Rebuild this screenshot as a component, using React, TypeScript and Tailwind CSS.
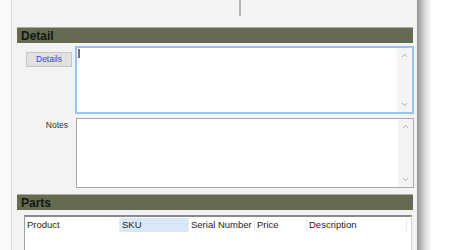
import { ChevronUp, ChevronDown } from 'lucide-react';

function ScrollBar() {
  return (
    <div className="w-[15px] flex flex-col justify-between items-center bg-[#f4f4f4] py-[3px]">
      <ChevronUp className="w-[9px] h-[9px] text-[#a8a8a8]" strokeWidth={2.5} />
      <ChevronDown className="w-[9px] h-[9px] text-[#a8a8a8]" strokeWidth={2.5} />
    </div>
  );
}

const columns = [
  { label: 'Product', w: 'w-[95px]', active: false },
  { label: 'SKU', w: 'w-[69px]', active: true },
  { label: 'Serial Number', w: 'w-[66px]', active: false },
  { label: 'Price', w: 'w-[52px]', active: false },
  { label: 'Description', w: 'w-[100px]', active: false },
];

export default function App() {
  return (
    <div
      className="w-[450px] h-[250px] flex bg-white overflow-hidden"
      style={{ fontFamily: '"Liberation Sans", Arial, sans-serif' }}
    >
      {/* desktop strip on the left */}
      <div className="w-[12px] shrink-0 bg-[#f9f9f9] border-r border-[#dedede]" />

      {/* form window */}
      <div className="w-[406px] shrink-0 bg-[#f3f3f3] border-r border-[#9a9a9a] flex flex-col">
        <div className="h-[27px] pl-[227px]">
          <div className="w-[2px] h-[16px] bg-[#b4b4ac]" />
        </div>

        {/* Detail section */}
        <div className="ml-[5px] w-[396px] h-[16px] bg-[#656b52] border-t border-[#a9ad9a] flex items-center pl-[4px]">
          <span className="text-[12px] font-bold text-[#151515] leading-none">Detail</span>
        </div>

        <div className="flex mt-[3px]">
          <div className="w-[63px] shrink-0 pl-[14px] pt-[6px]">
            <button className="block w-[46px] h-[15px] bg-[#e1e1e1] border border-[#c6c6c6] text-[8.5px] text-[#3a3aff] leading-none">
              Details
            </button>
          </div>
          <div className="w-[339px] h-[68px] bg-white border-2 border-[#94c4f0] flex">
            <div className="flex-1 pl-[1px] pt-[1px]">
              <div className="w-[2px] h-[9px] bg-[#707070]" />
            </div>
            <ScrollBar />
          </div>
        </div>

        <div className="flex mt-[4px]">
          <div className="w-[56px] shrink-0 text-right pt-[2px] text-[8.5px] leading-[10px] text-[#333]">Notes</div>
          <div className="ml-[8px] w-[338px] h-[70px] bg-white border border-[#ababab] flex">
            <div className="flex-1" />
            <ScrollBar />
          </div>
        </div>

        {/* Parts section */}
        <div className="ml-[5px] mt-[6px] w-[396px] h-[16px] bg-[#656b52] border-t border-[#a9ad9a] flex items-center pl-[4px]">
          <span className="text-[12px] font-bold text-[#151515] leading-none">Parts</span>
        </div>

        <div className="ml-[12px] mt-[5px] w-[388px] flex-1 bg-white border-t-2 border-l border-r border-t-[#8a8a8a] border-l-[#a0a0a0] border-r-[#d0d0d0] pt-[1px]">
          <div className="flex h-[14px]">
            {columns.map((c) => (
              <div
                key={c.label}
                className={`${c.w} shrink-0 pl-[2px] flex items-center text-[9.5px] text-[#1e1e1e] border-r border-[#ececec] ${
                  c.active ? 'bg-[#d9e8f7]' : ''
                }`}
              >
                {c.label}
              </div>
            ))}
          </div>
        </div>
      </div>

      {/* window shadow */}
      <div className="w-[14px] shrink-0 bg-gradient-to-r from-[#9c9c9c] via-[#dadada] to-white" />
      <div className="flex-1 bg-white" />
    </div>
  );
}
